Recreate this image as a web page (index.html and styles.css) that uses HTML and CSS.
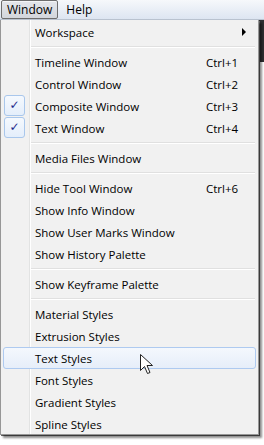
FILE: index.html
```html
<!DOCTYPE html>
<html lang="en">
<head>
    <meta charset="UTF-8">
    <title>Window Menu</title>
    <link rel="stylesheet" href="styles.css">
</head>
<body>
    <div class="menubar">
        <span class="menubar-item open">Window</span>
        <span class="menubar-item">Help</span>
    </div>

    <div class="backdrop"></div>

    <div class="menu">
        <div class="item"><span class="label">Workspace</span><span class="submenu-arrow"></span></div>
        <div class="sep"></div>
        <div class="item"><span class="label">Timeline Window</span><span class="key">Ctrl+1</span></div>
        <div class="item"><span class="label">Control Window</span><span class="key">Ctrl+2</span></div>
        <div class="item checked"><span class="check">&#10003;</span><span class="label">Composite Window</span><span class="key">Ctrl+3</span></div>
        <div class="item checked"><span class="check">&#10003;</span><span class="label">Text Window</span><span class="key">Ctrl+4</span></div>
        <div class="sep"></div>
        <div class="item"><span class="label">Media Files Window</span></div>
        <div class="sep"></div>
        <div class="item"><span class="label">Hide Tool Window</span><span class="key">Ctrl+6</span></div>
        <div class="item"><span class="label">Show Info Window</span></div>
        <div class="item"><span class="label">Show User Marks Window</span></div>
        <div class="item"><span class="label">Show History Palette</span></div>
        <div class="sep"></div>
        <div class="item"><span class="label">Show Keyframe Palette</span></div>
        <div class="sep"></div>
        <div class="item"><span class="label">Material Styles</span></div>
        <div class="item"><span class="label">Extrusion Styles</span></div>
        <div class="item hover"><span class="label">Text Styles</span>
            <svg class="cursor" width="13" height="21" viewBox="0 0 13 21">
                <path d="M0.5 0.5 L0.5 16.5 L4.5 12.5 L7.5 19.5 L10 18.5 L7 11.5 L12.5 11.5 Z" fill="#fff" stroke="#222" stroke-width="1" stroke-linejoin="miter"/>
            </svg>
        </div>
        <div class="item"><span class="label">Font Styles</span></div>
        <div class="item"><span class="label">Gradient Styles</span></div>
        <div class="item"><span class="label">Spline Styles</span></div>
    </div>
</body>
</html>
```

FILE: styles.css
```css
* {
    margin: 0;
    padding: 0;
    box-sizing: border-box;
}

body {
    width: 264px;
    height: 445px;
    background: #ffffff;
    font-family: 'Open Sans', 'Noto Sans', sans-serif;
    font-size: 11.5px;
    color: #000;
    position: relative;
    overflow: hidden;
}

.menubar {
    height: 20px;
    display: flex;
    align-items: center;
    gap: 3px;
    padding-left: 1px;
    background: linear-gradient(#f6f8fb, #dde5f1);
    border-bottom: 1px solid #b9c2cf;
}

.menubar-item {
    padding: 0 5px;
    line-height: 17px;
    font-size: 12px;
}

.menubar-item.open {
    border: 1px solid #6d6d6d;
    border-radius: 2px;
    background: linear-gradient(#e4e6ea, #d3d6dc);
    box-shadow: inset 0 1px 0 rgba(255, 255, 255, 0.6);
}

.backdrop {
    position: absolute;
    right: 0;
    top: 20px;
    width: 6px;
    height: 42px;
    background: #2e2f31;
}

.menu {
    position: relative;
    width: 259px;
    height: 415px;
    padding: 1px 2px 1px;
    background: linear-gradient(to right, #f1f1f1 28px, #e2e3e3 28px, #e2e3e3 29px, #ffffff 29px, #ffffff 30px, #f1f1f1 30px);
    border: 1px solid #979797;
    border-top: none;
    box-shadow: 3px 3px 2px rgba(0, 0, 0, 0.45), 1px 1px 0 #6a6a6a;
}

.item {
    position: relative;
    height: 22px;
    display: flex;
    align-items: center;
    padding-left: 32px;
}

.label {
    flex: 1;
}

.key {
    width: 50px;
}

.submenu-arrow {
    width: 0;
    height: 0;
    margin-right: 10px;
    border-left: 4px solid #000;
    border-top: 4px solid transparent;
    border-bottom: 4px solid transparent;
}

.check {
    position: absolute;
    left: 1px;
    top: 0;
    width: 21px;
    height: 21px;
    border: 1px solid #a9c7ec;
    border-radius: 3px;
    background: linear-gradient(#f5f9fe, #e4eefb);
    color: #1d2a8c;
    font-family: 'DejaVu Sans', sans-serif;
    font-size: 12px;
    font-weight: bold;
    text-align: center;
    line-height: 19px;
}

.sep {
    height: 8px;
    margin-left: 28px;
    margin-right: 1px;
    background: linear-gradient(#f1f1f1 3px, #e0e0e0 3px, #e0e0e0 4px, #ffffff 4px, #ffffff 5px, #f1f1f1 5px);
}

.item.hover {
    border: 1px solid #aecaf0;
    border-radius: 3px;
    padding-left: 31px;
    background: linear-gradient(#f4f8fd, #e6eef9);
}

.cursor {
    position: absolute;
    left: 136px;
    top: 6px;
}
```
